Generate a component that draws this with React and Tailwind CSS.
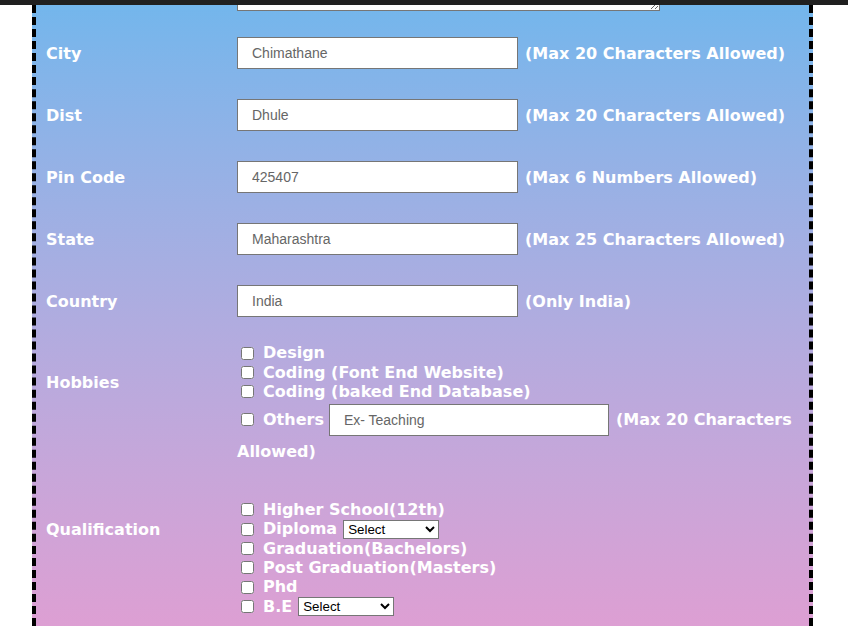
import React from "react";

const fields = [
  { label: "City", value: "Chimathane", hint: "(Max 20 Characters Allowed)" },
  { label: "Dist", value: "Dhule", hint: "(Max 20 Characters Allowed)" },
  { label: "Pin Code", value: "425407", hint: "(Max 6 Numbers Allowed)" },
  { label: "State", value: "Maharashtra", hint: "(Max 25 Characters Allowed)" },
  { label: "Country", value: "India", hint: "(Only India)" },
];

const inputCls =
  "h-[32px] border border-[#767676] bg-white px-[14px] text-[14px] text-[#666] font-normal font-['Liberation_Sans',Arial,sans-serif] outline-none";

const selectCls =
  "w-[96px] h-[19px] border border-[#767676] bg-white text-[13.33px] text-black font-normal font-['Liberation_Sans',Arial,sans-serif] pl-0";

function TextRow({ label, value, hint }) {
  return (
    <div className="flex items-center h-[32px]">
      <div className="w-[201px] pl-[10px] pt-[2px]">{label}</div>
      <input defaultValue={value} className={`${inputCls} w-[281px]`} />
      <span className="ml-[7px] pt-[2px] whitespace-nowrap">{hint}</span>
    </div>
  );
}

function Check({ children, tall }) {
  return (
    <div className={`flex items-center whitespace-nowrap ${tall ? "h-[40px] pb-[4px]" : "h-[19.4px]"}`}>
      <input type="checkbox" className="m-0 ml-[4px] w-[13px] h-[13px]" />
      <span className="ml-[9px] flex items-center">{children}</span>
    </div>
  );
}

function DegreeSelect() {
  return (
    <select className={`${selectCls} ml-[6px]`} defaultValue="">
      <option value="">Select</option>
      <option>Science</option>
      <option>Commerce</option>
      <option>Arts</option>
    </select>
  );
}

export default function App() {
  return (
    <div className="h-[626px] overflow-hidden bg-white font-['DejaVu_Sans',Verdana,sans-serif] text-[16px] font-bold text-white">
      <div className="h-[5px] bg-[#202020]" />
      <div className="ml-[32px] w-[781px] h-[621px] border-x-4 border-dashed border-black bg-gradient-to-b from-[#73b6ec] to-[#dd9fd3]">
        {/* address textarea, scrolled mostly out of view */}
        <div className="h-[6px] overflow-hidden flex items-end pl-[201px]">
          <textarea className="block shrink-0 w-[423px] h-[50px] border border-[#767676] bg-white" />
        </div>

        <div className="mt-[26px] flex flex-col gap-[30px]">
          {fields.map((f) => (
            <TextRow key={f.label} {...f} />
          ))}
        </div>

        {/* Hobbies */}
        <div className="mt-[26.5px] flex">
          <div className="w-[201px] pl-[10px] mt-[29px] leading-[19.4px]">Hobbies</div>
          <div className="flex flex-col">
            <Check>Design</Check>
            <Check>Coding (Font End Website)</Check>
            <Check>Coding (baked End Database)</Check>
            <Check tall>
              Others
              <input defaultValue="Ex- Teaching" className={`${inputCls} w-[280px] ml-[5px]`} />
              <span className="ml-[7px]">(Max 20 Characters</span>
            </Check>
            <div className="h-[19.4px] leading-[19.4px]">Allowed)</div>
          </div>
        </div>

        {/* Qualification */}
        <div className="mt-[39px] flex">
          <div className="w-[201px] pl-[10px] mt-[20px] leading-[19.4px]">Qualification</div>
          <div className="flex flex-col">
            <Check>Higher School(12th)</Check>
            <Check>
              Diploma
              <DegreeSelect />
            </Check>
            <Check>Graduation(Bachelors)</Check>
            <Check>Post Graduation(Masters)</Check>
            <Check>Phd</Check>
            <Check>
              B.E
              <DegreeSelect />
            </Check>
          </div>
        </div>
      </div>
    </div>
  );
}
